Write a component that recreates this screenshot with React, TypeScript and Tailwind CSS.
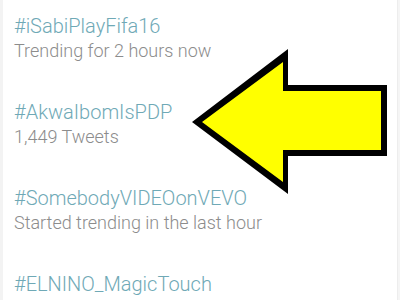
import React from "react";

const items = [
  { tag: "#iSabiPlayFifa16", sub: "Trending for 2 hours now" },
  { tag: "#AkwaIbomIsPDP", sub: "1,449 Tweets" },
  { tag: "#SomebodyVIDEOonVEVO", sub: "Started trending in the last hour" },
  { tag: "#ELNINO_MagicTouch", sub: "" },
];

export default function App() {
  return (
    <div
      className="relative w-[400px] h-[300px] overflow-hidden bg-white"
      style={{ fontFamily: "Roboto, 'Noto Sans', sans-serif" }}
    >
      <div className="absolute left-0 top-0 h-full w-[3px] bg-[#f3f3f3]" />
      <div className="absolute right-0 top-0 h-full w-[3px] bg-[#f5f5f5] border-l border-[#ededed]" />
      <div className="flex flex-col pl-[14px] pt-[13px]">
        {items.map((it) => (
          <div key={it.tag} className="flex flex-col mb-[36px]">
            <div className="text-[20px] leading-[26px] font-light text-[#6fa9b6] whitespace-nowrap">
              {it.tag}
            </div>
            {it.sub && (
              <div className="text-[18px] leading-[24px] font-light text-[#8c8c8c] whitespace-nowrap">
                {it.sub}
              </div>
            )}
          </div>
        ))}
      </div>
      <svg
        className="absolute left-0 top-0"
        width="400"
        height="300"
        viewBox="0 0 400 300"
      >
        <polygon
          points="192,122 288,49 288,85 387,85 387,156 288,156 288,194"
          fill="#000"
        />
        <polygon
          points="202,122 283,62 283,91 381,91 381,150 283,150 283,182"
          fill="#ffff00"
        />
      </svg>
    </div>
  );
}
